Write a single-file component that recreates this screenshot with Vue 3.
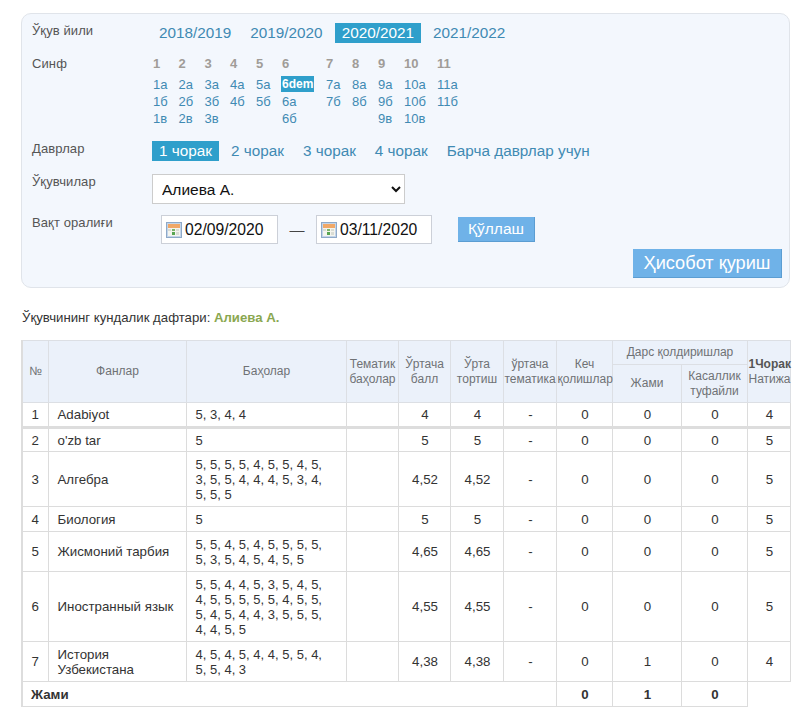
<template>
  <div class="page">
    <div class="filters">
      <div class="row row-years">
        <div class="label">Ўқув йили</div>
        <div class="pills years">
          <a v-for="y in years" :key="y" class="pill" :class="{ active: y === '2020/2021' }">{{ y }}</a>
        </div>
      </div>

      <div class="row row-classes">
        <div class="label">Синф</div>
        <div class="classes">
          <div v-for="c in classes" :key="c.num" class="class-col" :style="{ width: c.w + 'px' }">
            <div class="class-num">{{ c.num }}</div>
            <a v-for="item in c.items" :key="item" class="class-link" :class="{ active: item === '6dem' }">{{ item }}</a>
          </div>
        </div>
      </div>

      <div class="row row-periods">
        <div class="label">Даврлар</div>
        <div class="pills periods">
          <a v-for="p in periods" :key="p" class="pill" :class="{ active: p === '1 чорак' }">{{ p }}</a>
        </div>
      </div>

      <div class="row row-students">
        <div class="label">Ўқувчилар</div>
        <select class="student">
          <option>Алиева А.</option>
        </select>
      </div>

      <div class="row row-dates">
        <div class="label">Вақт оралиғи</div>
        <div class="dates">
          <label class="date">
            <svg class="cal" width="16" height="16" viewBox="0 0 16 16">
              <rect x="0.5" y="0.5" width="15" height="15" fill="#c3d5ea" stroke="#8ea9c8" />
              <rect x="2" y="2" width="12" height="12" fill="#f4f4ee" />
              <rect x="2" y="2" width="12" height="4" fill="#f0a868" />
              <rect x="2" y="7" width="3" height="2" fill="#d9dcd4" />
              <rect x="6" y="7" width="3" height="2" fill="#7cb56c" />
              <rect x="10" y="7" width="3" height="2" fill="#d9dcd4" />
              <rect x="6" y="10" width="3" height="3" fill="#58a552" />
              <rect x="10" y="10" width="3" height="3" fill="#d9dcd4" />
            </svg>
            <span>02/09/2020</span>
          </label>
          <span class="dash">—</span>
          <label class="date second">
            <svg class="cal" width="16" height="16" viewBox="0 0 16 16">
              <rect x="0.5" y="0.5" width="15" height="15" fill="#c3d5ea" stroke="#8ea9c8" />
              <rect x="2" y="2" width="12" height="12" fill="#f4f4ee" />
              <rect x="2" y="2" width="12" height="4" fill="#f0a868" />
              <rect x="2" y="7" width="3" height="2" fill="#d9dcd4" />
              <rect x="6" y="7" width="3" height="2" fill="#7cb56c" />
              <rect x="10" y="7" width="3" height="2" fill="#d9dcd4" />
              <rect x="6" y="10" width="3" height="3" fill="#58a552" />
              <rect x="10" y="10" width="3" height="3" fill="#d9dcd4" />
            </svg>
            <span>03/11/2020</span>
          </label>
          <button class="btn btn-apply">Қўллаш</button>
        </div>
      </div>

      <div class="report-line">
        <button class="btn btn-report">Ҳисобот қуриш</button>
      </div>
    </div>

    <p class="caption">Ўқувчининг кундалик дафтари: <b>Алиева А.</b></p>

    <table class="diary">
      <colgroup>
        <col v-for="w in colWidths" :key="w.id" :style="{ width: w.px + 'px' }" />
      </colgroup>
      <thead>
        <tr class="head-top">
          <th rowspan="2">№</th>
          <th rowspan="2">Фанлар</th>
          <th rowspan="2">Баҳолар</th>
          <th rowspan="2">Тематик<br />баҳолар</th>
          <th rowspan="2">Ўртача<br />балл</th>
          <th rowspan="2">Ўрта<br />тортиш</th>
          <th rowspan="2">ўртача<br />тематика</th>
          <th rowspan="2">Кеч<br />қолишлар</th>
          <th colspan="2">Дарс қолдиришлар</th>
          <th rowspan="2" class="result"><b>1Чорак</b><br />Натижа</th>
        </tr>
        <tr class="head-sub">
          <th>Жами</th>
          <th>Касаллик<br />туфайли</th>
        </tr>
      </thead>
      <tbody>
        <tr v-for="r in rows" :key="r.n" :class="{ 'first-row': r.n === 1 }" :style="{ height: r.h + 'px' }">
          <td class="c num">{{ r.n }}</td>
          <td class="subject">{{ r.subject }}</td>
          <td class="grades">{{ r.grades }}</td>
          <td></td>
          <td class="c">{{ r.avg }}</td>
          <td class="c">{{ r.avg }}</td>
          <td class="c">-</td>
          <td class="c">0</td>
          <td class="c">{{ r.miss }}</td>
          <td class="c">0</td>
          <td class="c">{{ r.res }}</td>
        </tr>
        <tr class="total">
          <td colspan="7" class="total-label">Жами</td>
          <td class="c">0</td>
          <td class="c">1</td>
          <td class="c">0</td>
        </tr>
      </tbody>
    </table>
  </div>
</template>

<script setup>
const years = ['2018/2019', '2019/2020', '2020/2021', '2021/2022']
const periods = ['1 чорак', '2 чорак', '3 чорак', '4 чорак', 'Барча даврлар учун']

const classes = [
  { num: 1, w: 25.5, items: ['1а', '1б', '1в'] },
  { num: 2, w: 26, items: ['2а', '2б', '2в'] },
  { num: 3, w: 25.5, items: ['3а', '3б', '3в'] },
  { num: 4, w: 26, items: ['4а', '4б'] },
  { num: 5, w: 26, items: ['5а', '5б'] },
  { num: 6, w: 44, items: ['6dem', '6а', '6б'] },
  { num: 7, w: 26, items: ['7а', '7б'] },
  { num: 8, w: 26, items: ['8а', '8б'] },
  { num: 9, w: 26, items: ['9а', '9б', '9в'] },
  { num: 10, w: 33, items: ['10а', '10б', '10в'] },
  { num: 11, w: 30, items: ['11а', '11б'] }
]

const colWidths = [26, 138, 160, 52, 52, 53, 53, 56, 69, 66, 43].map((px, id) => ({ id, px }))

const rows = [
  { n: 1, subject: 'Adabiyot', grades: '5, 3, 4, 4', avg: '4', miss: 0, res: 4, h: 25 },
  { n: 2, subject: "o'zb tar", grades: '5', avg: '5', miss: 0, res: 5, h: 24 },
  { n: 3, subject: 'Алгебра', grades: '5, 5, 5, 5, 4, 5, 5, 4, 5, 3, 5, 5, 4, 4, 4, 5, 3, 4, 5, 5, 5', avg: '4,52', miss: 0, res: 5, h: 55 },
  { n: 4, subject: 'Биология', grades: '5', avg: '5', miss: 0, res: 5, h: 25 },
  { n: 5, subject: 'Жисмоний тарбия', grades: '5, 5, 4, 5, 4, 5, 5, 5, 5, 5, 3, 5, 4, 5, 4, 5, 5', avg: '4,65', miss: 0, res: 5, h: 40 },
  { n: 6, subject: 'Иностранный язык', grades: '5, 5, 4, 4, 5, 3, 5, 4, 5, 4, 5, 5, 5, 5, 5, 4, 5, 5, 5, 4, 5, 4, 4, 3, 5, 5, 5, 4, 4, 5, 5', avg: '4,55', miss: 0, res: 5, h: 70 },
  { n: 7, subject: 'История Узбекистана', grades: '4, 5, 4, 5, 4, 4, 5, 5, 4, 5, 5, 4, 3', avg: '4,38', miss: 1, res: 4, h: 40 }
]
</script>

<style>
body {
  background: #fff;
}
</style>

<style scoped>
.page {
  width: 797px;
  height: 717px;
  padding: 13px 7px 0 21px;
  box-sizing: border-box;
  overflow: hidden;
  font-family: "Liberation Sans", Arial, sans-serif;
  color: #333;
}

.filters {
  height: 275px;
  box-sizing: border-box;
  padding: 9px 7px 0 10px;
  background: #f3f7fd;
  border: 1px solid #e0e4ea;
  border-radius: 10px;
}

.row {
  display: flex;
}

.label {
  width: 120px;
  flex: none;
  font-size: 13px;
  line-height: 15px;
  color: #555;
  letter-spacing: 0.1px;
}

.pills {
  display: flex;
}

.pill {
  padding: 0 7px;
  height: 20px;
  line-height: 20px;
  color: #3f8ab3;
}

.pill.active {
  background: #2f9fcb;
  color: #fff;
}

.years .pill {
  font-size: 15.3px;
  margin-right: 5px;
}

.row-years {
  height: 34px;
}

.row-classes {
  height: 84px;
}

.row-classes .label {
  margin-top: -1px;
}

.classes {
  display: flex;
  align-items: flex-start;
  margin: -1px 0 0 1px;
}

.class-col {
  flex: none;
  display: flex;
  flex-direction: column;
  align-items: flex-start;
  font-size: 13px;
}

.class-num {
  height: 20px;
  line-height: 15px;
  font-weight: bold;
  font-size: 13px;
  color: #a09c98;
}

.class-link {
  height: 17px;
  line-height: 17px;
  padding: 0 1px;
  margin-left: -1px;
  color: #3f8ab3;
}

.class-link.active {
  background: #2f9fcb;
  color: #fff;
  font-weight: bold;
  font-size: 12px;
  height: 16px;
  line-height: 16px;
  margin-bottom: 1px;
}

.row-periods {
  height: 33px;
}

.periods .pill {
  font-size: 15.3px;
  margin-right: 5px;
}

.row-students {
  height: 41px;
}

.student {
  width: 253px;
  height: 30px;
  padding: 0 5px;
  background: #fff;
  border: 1px solid #ccc;
  border-radius: 0;
  font-family: inherit;
  font-size: 15.5px;
  color: #111;
}

.row-dates {
  height: 34px;
}

.dates {
  display: flex;
  align-items: flex-start;
  padding-left: 9px;
}

.date {
  display: flex;
  align-items: center;
  gap: 3px;
  width: 117px;
  height: 29px;
  box-sizing: border-box;
  padding-left: 4px;
  background: #fff;
  border: 1px solid #ccd0d8;
  font-size: 15.7px;
  color: #111;
}

.date.second {
  width: 116px;
}

.cal {
  flex: none;
}

.dash {
  width: 38px;
  text-align: center;
  line-height: 29px;
  font-size: 15px;
  color: #444;
}

.btn {
  border: 0;
  padding: 0;
  background: #6fb2e8;
  color: #fff;
  font-family: inherit;
  border-right: 1px solid #5b9dd2;
  border-bottom: 1px solid #5b9dd2;
}

.btn-apply {
  width: 77px;
  height: 25px;
  margin: 2px 0 0 26px;
  font-size: 15.5px;
}

.report-line {
  display: flex;
  justify-content: flex-end;
}

.btn-report {
  width: 149px;
  height: 29px;
  font-size: 18.2px;
}

.caption {
  margin: 22px 0 0 1px;
  font-size: 13.2px;
  line-height: 15px;
  color: #333;
}

.caption b {
  color: #8aa750;
}

.diary {
  margin-top: 15px;
  width: 768px;
  table-layout: fixed;
  border-collapse: collapse;
  border-left: 2px solid #ddd;
  font-size: 13.3px;
}

.diary th {
  padding: 0 0 0 1px;
  border: 1px solid #dcdfe4;
  background: #ebf1fa;
  font-weight: normal;
  font-size: 12px;
  line-height: 15px;
  color: #6f7275;
  text-align: center;
}

.head-top {
  height: 24px;
}

.head-sub {
  height: 38px;
}

.diary .result {
  padding-left: 1px;
  white-space: nowrap;
  text-align: left;
}

.result b {
  color: #555;
}

.diary td {
  padding: 0;
  border: 1px solid #dcdcdc;
  line-height: 15px;
  color: #333;
}

.diary .first-row td {
  border-bottom: 3px solid #ddd;
}

.diary .c {
  padding-left: 2px;
  text-align: center;
}

.diary .num {
  padding-left: 0;
}

.diary .subject {
  padding: 0 7px 0 9px;
}

.diary .grades {
  padding: 0 10px 0 9px;
  font-size: 13px;
}

.total {
  height: 25px;
}

.diary .total-label {
  padding-left: 8px;
  font-weight: bold;
}

.total .c {
  font-weight: bold;
}
</style>
